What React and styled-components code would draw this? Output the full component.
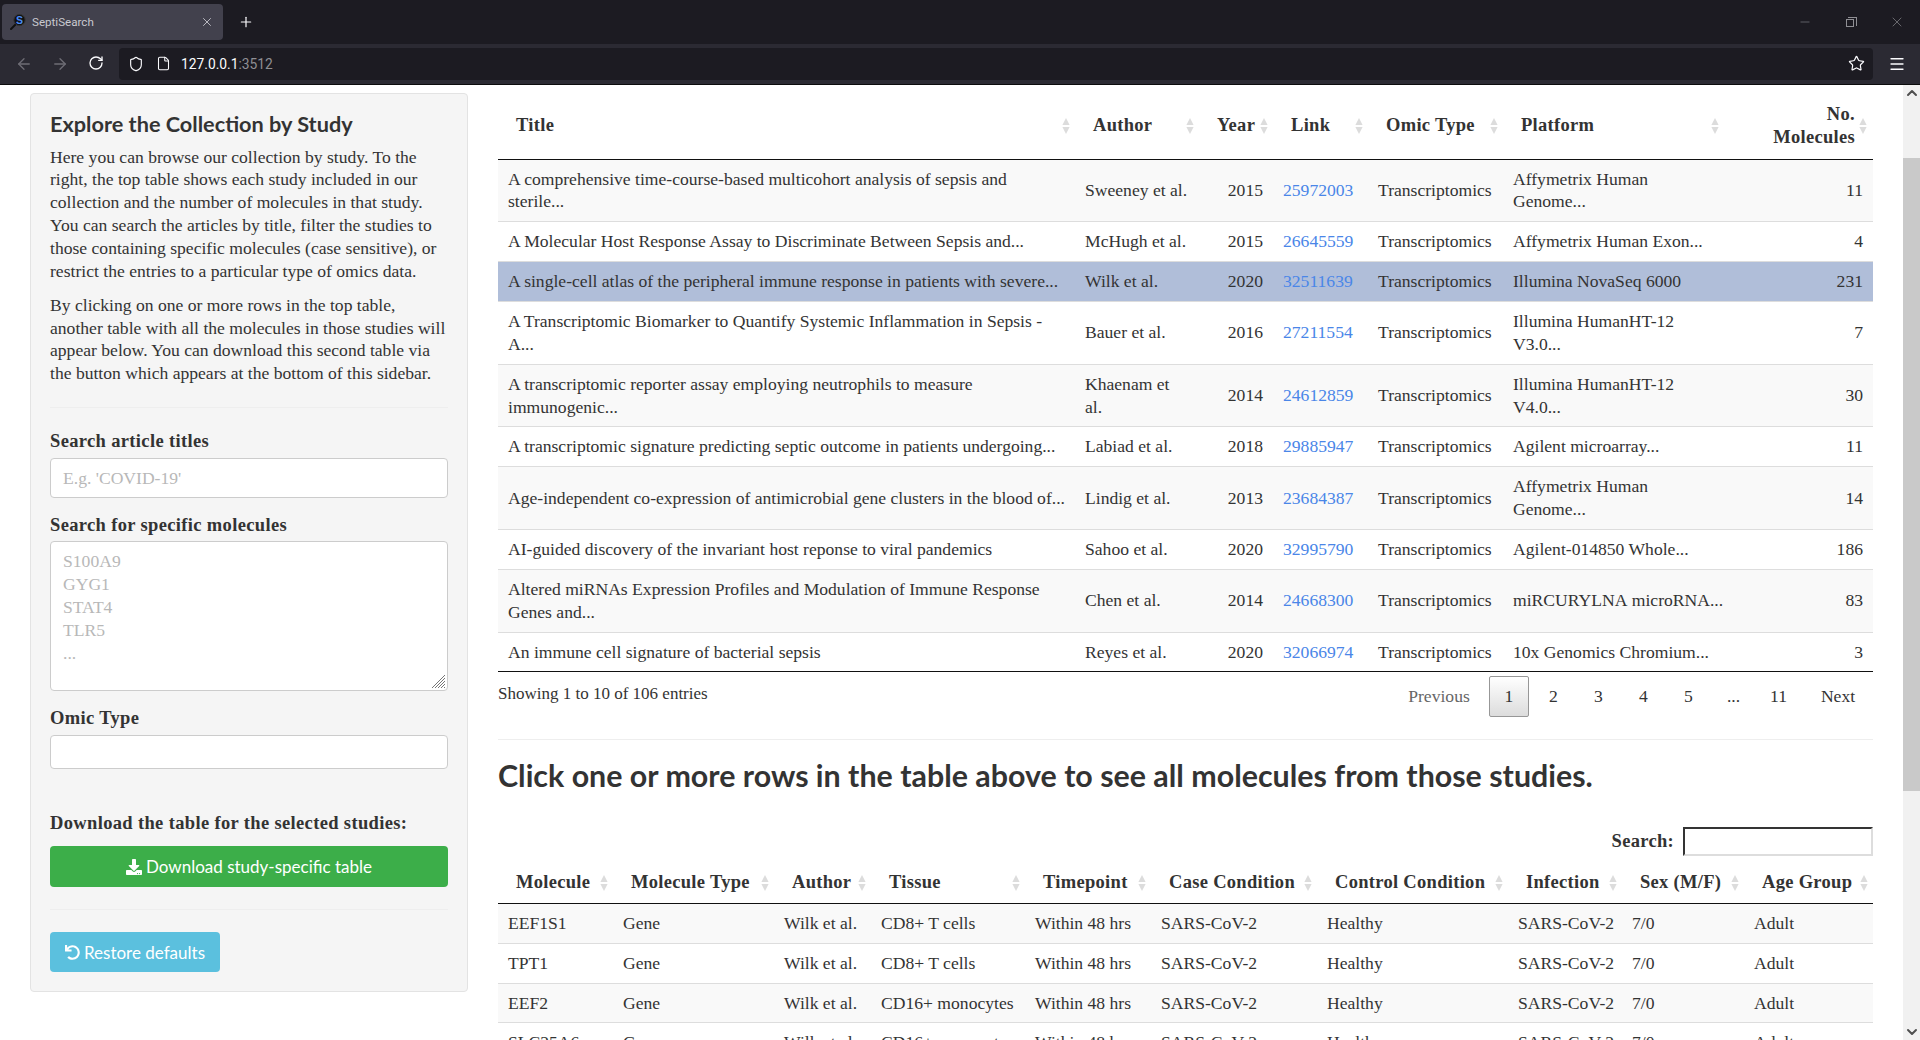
import React from 'react';
import styled, { createGlobalStyle } from 'styled-components';
import { ArrowLeft, ArrowRight, RotateCw, Shield, File, Star, Menu, Plus, X, Minus, ChevronUp, ChevronDown } from 'lucide-react';
import { FaDownload, FaUndo } from 'react-icons/fa';

const SERIF = '"Liberation Serif", "Times New Roman", serif';
const SANS = 'Lato, "Open Sans", sans-serif';

const studies = [
  { title: 'A comprehensive time-course-based multicohort analysis of sepsis and sterile...', author: 'Sweeney et al.', year: 2015, link: '25972003', platform: 'Affymetrix Human Genome...', n: 11 },
  { title: 'A Molecular Host Response Assay to Discriminate Between Sepsis and...', author: 'McHugh et al.', year: 2015, link: '26645559', platform: 'Affymetrix Human Exon...', n: 4 },
  { title: 'A single-cell atlas of the peripheral immune response in patients with severe...', author: 'Wilk et al.', year: 2020, link: '32511639', platform: 'Illumina NovaSeq 6000', n: 231, selected: true },
  { title: 'A Transcriptomic Biomarker to Quantify Systemic Inflammation in Sepsis - A...', author: 'Bauer et al.', year: 2016, link: '27211554', platform: 'Illumina HumanHT-12 V3.0...', n: 7 },
  { title: 'A transcriptomic reporter assay employing neutrophils to measure immunogenic...', author: 'Khaenam et al.', year: 2014, link: '24612859', platform: 'Illumina HumanHT-12 V4.0...', n: 30 },
  { title: 'A transcriptomic signature predicting septic outcome in patients undergoing...', author: 'Labiad et al.', year: 2018, link: '29885947', platform: 'Agilent microarray...', n: 11 },
  { title: 'Age-independent co-expression of antimicrobial gene clusters in the blood of...', author: 'Lindig et al.', year: 2013, link: '23684387', platform: 'Affymetrix Human Genome...', n: 14 },
  { title: 'AI-guided discovery of the invariant host reponse to viral pandemics', author: 'Sahoo et al.', year: 2020, link: '32995790', platform: 'Agilent-014850 Whole...', n: 186 },
  { title: 'Altered miRNAs Expression Profiles and Modulation of Immune Response Genes and...', author: 'Chen et al.', year: 2014, link: '24668300', platform: 'miRCURYLNA\u00a0microRNA...', n: 83 },
  { title: 'An immune cell signature of bacterial sepsis', author: 'Reyes et al.', year: 2020, link: '32066974', platform: '10x\u00a0Genomics\u00a0Chromium...', n: 3 },
];

const molecules = [
  ['EEF1S1', 'CD8+ T cells'],
  ['TPT1', 'CD8+ T cells'],
  ['EEF2', 'CD16+ monocytes'],
  ['SLC25A6', 'CD16+ monocytes'],
];

const studyCols = [577, 124, 74, 95, 135, 221, 149];
const studyHeads = ['Title', 'Author', 'Year', 'Link', 'Omic Type', 'Platform'];
const moleculeCols = [115, 161, 97, 154, 126, 166, 191, 114, 122, 129];
const moleculeHeads = ['Molecule', 'Molecule Type', 'Author', 'Tissue', 'Timepoint', 'Case Condition', 'Control Condition', 'Infection', 'Sex (M/F)', 'Age Group'];
const pages = ['2', '3', '4', '5', '...', '11'];

const GlobalStyle = createGlobalStyle`
  html, body {
    margin: 0;
    height: 100%;
    overflow: hidden;
    background: #fff;
  }
  * { box-sizing: border-box; }
`;

const Window = styled.div`
  height: 1040px;
  display: flex;
  flex-direction: column;
  color: #333;
  font: 17.6px/22.86px ${SERIF};
`;

const TabBar = styled.div`
  height: 44px;
  flex: none;
  display: flex;
  align-items: flex-start;
  padding-top: 4px;
  padding-left: 2px;
  background: #1c1b22;
  color: #fbfbfe;
`;

const Tab = styled.div`
  width: 221px;
  height: 36px;
  display: flex;
  align-items: center;
  padding: 0 9px 0 8px;
  background: #42414d;
  border-radius: 4px;
  font: 11.6px Roboto, sans-serif;
  color: #c9c9d0;
`;

const TabTitle = styled.span`
  flex: 1;
  margin-left: 6px;
`;

const NewTab = styled.div`
  width: 44px;
  height: 36px;
  display: flex;
  align-items: center;
  justify-content: center;
  margin-left: 1px;
`;

const WindowControls = styled.div`
  margin-left: auto;
  height: 36px;
  display: flex;
  color: #8f8f94;
`;

const ControlCell = styled.div`
  width: 46px;
  display: flex;
  align-items: center;
  justify-content: center;
`;

const RestoreIcon = styled.span`
  position: relative;
  display: block;
  width: 8px;
  height: 8px;
  margin: 2px 2px 0 0;
  border: 1px solid #8f8f94;

  &::before {
    content: '';
    position: absolute;
    left: 1px;
    top: -3px;
    width: 8px;
    height: 8px;
    border: 1px solid #8f8f94;
    border-left: 0;
    border-bottom: 0;
  }
`;

const Toolbar = styled.div`
  height: 41px;
  flex: none;
  display: flex;
  align-items: center;
  background: #2b2a33;
  border-bottom: 1px solid #0c0c0d;
  padding-bottom: 1px;
  color: #fbfbfe;
`;

const NavButton = styled.div`
  width: 36px;
  display: flex;
  justify-content: center;
  color: ${p => (p.$dim ? '#6f6e76' : '#fbfbfe')};
`;

const NavGroup = styled.div`
  width: 119px;
  flex: none;
  display: flex;
  padding-left: 6px;
`;

const UrlBar = styled.div`
  flex: 1;
  height: 32px;
  display: flex;
  align-items: center;
  background: #1c1b22;
  border-radius: 4px;
  padding: 0 8px 0 9px;
  font: 13.8px Roboto, sans-serif;
`;

const UrlIcon = styled.span`
  display: flex;
  margin-right: ${p => p.$gap}px;
`;

const Port = styled.span`
  color: #8f8f94;
`;

const UrlStar = styled.span`
  display: flex;
  margin-left: auto;
`;

const MenuButton = styled.div`
  width: 47px;
  flex: none;
  display: flex;
  justify-content: center;
`;

const Viewport = styled.div`
  flex: 1;
  min-height: 0;
  display: flex;
`;

const Page = styled.div`
  flex: 1;
  min-width: 0;
  overflow: hidden;
  display: flex;
  align-items: flex-start;
  gap: 30px;
  padding: 8px 30px 0;
`;

const Scrollbar = styled.div`
  width: 17px;
  flex: none;
  display: flex;
  flex-direction: column;
  align-items: center;
  background: #f1f1f1;
  color: #505050;
`;

const ScrollThumb = styled.div`
  width: 100%;
  height: 633px;
  margin-top: 57px;
  background: #c9c9c9;
`;

const ScrollEnd = styled.div`
  margin-top: auto;
  height: 16px;
  display: flex;
`;

const Sidebar = styled.aside`
  width: 438px;
  flex: none;
  padding: 19px;
  background: #f5f5f5;
  border: 1px solid #e3e3e3;
  border-radius: 4px;
`;

const SideTitle = styled.h4`
  margin: 0 0 10.6px;
  font: 700 21.7px/22px ${SANS};
  color: #333;
`;

const Intro = styled.p`
  margin: 0 0 11px;
`;

const Rule = styled.hr`
  border: 0;
  border-top: 1px solid #eee;
  margin: ${p => p.$my ?? 20}px 0;
`;

const Label = styled.label`
  display: block;
  font-size: 18.5px;
  font-weight: 700;
  letter-spacing: 0.35px;
  margin-bottom: 5px;
`;

const Field = styled.div`
  margin-bottom: 15.5px;
`;

const TextInput = styled.div`
  height: ${p => p.$h || 40}px;
  padding: 8px 12px;
  background: #fff;
  border: 1px solid #ccc;
  border-radius: 4px;
  color: #b8b8b8;
  position: relative;
`;

const Grip = styled.svg`
  position: absolute;
  right: 1px;
  bottom: 1px;
`;

const DownloadLabel = styled(Label)`
  margin-top: 43.5px;
  margin-bottom: 11px;
`;

const Button = styled.div`
  display: flex;
  align-items: center;
  justify-content: center;
  gap: 4px;
  height: ${p => p.$h}px;
  width: ${p => p.$w || '100%'};
  background: ${p => p.$bg};
  border-radius: 4px;
  color: #fff;
  font: 400 17px ${SANS};
`;

const Main = styled.main`
  flex: 1;
  min-width: 0;
`;

const Table = styled.table`
  width: 100%;
  table-layout: fixed;
  border-collapse: collapse;
  border-bottom: ${p => (p.$closed ? '1px solid #111' : '0')};
  white-space: ${p => (p.$nowrap ? 'nowrap' : 'normal')};
`;

const Th = styled.th`
  padding: 8px 0 8px 18px;
  border-bottom: 1px solid #111;
  text-align: left;
  height: ${p => p.$h}px;
  font-size: 18.5px;
  letter-spacing: 0.3px;
`;

const ThInner = styled.div`
  display: flex;
  align-items: center;
  justify-content: ${p => (p.$right ? 'flex-end' : 'space-between')};
  gap: ${p => (p.$right ? 1 : 0)}px;
  padding-right: ${p => (p.$right ? 6 : 5)}px;
  text-align: ${p => (p.$right ? 'right' : 'left')};
`;

const Row = styled.tr`
  background: ${p => (p.$selected ? '#b0bed9' : p.$odd ? '#f9f9f9' : '#fff')};
`;

const Td = styled.td`
  padding: 8px 10px;
  border-top: 1px solid #ddd;
  text-align: ${p => (p.$right ? 'right' : 'left')};

  tr:first-child > & {
    border-top: 0;
  }
`;

const CellLink = styled.a`
  color: #4a86e8;
  text-decoration: none;
`;

const TableFooter = styled.div`
  display: flex;
  justify-content: space-between;
  align-items: flex-start;
  height: 67px;
  padding-top: 4px;
`;

const Info = styled.div`
  padding-top: 7px;
  font-size: 17px;
`;

const Pager = styled.div`
  display: flex;
  align-items: center;
`;

const PageLink = styled.div`
  width: ${p => p.$w || 45}px;
  height: 41px;
  margin-right: ${p => (p.$current ? 2 : 0)}px;
  padding-left: ${p => (p.$next ? 2 : 0)}px;
  display: flex;
  align-items: center;
  justify-content: center;
  color: ${p => (p.$muted ? '#666' : '#333')};
  border: 1px solid ${p => (p.$current ? '#979797' : 'transparent')};
  border-radius: 2px;
  background: ${p => (p.$current ? 'linear-gradient(to bottom, #fff 0%, #dcdcdc 100%)' : 'transparent')};
`;

const SubHeading = styled.h3`
  margin: 19px 0 0;
  font: 700 30.4px/32px ${SANS};
  color: #333;
`;

const SearchRow = styled.div`
  display: flex;
  justify-content: flex-end;
  align-items: center;
  gap: 9px;
  margin: 36px 0 6px;
  font-size: 18.5px;
  font-weight: 700;
  letter-spacing: 0.3px;
`;

const SearchBox = styled.div`
  width: 190px;
  height: 29px;
  border: 2px inset #ddd;
  border-top-color: #888;
  border-left-color: #888;
  background: #fff;
`;

const Arrows = styled.svg`
  flex: none;
  margin-left: 3px;
`;

function SortArrows() {
  return (
    <Arrows width="8" height="16" viewBox="0 0 8 16">
      <path d="M4 0L7.6 7H0.4z" fill="#dcdcdc" />
      <path d="M4 16L0.4 9H7.6z" fill="#dcdcdc" />
    </Arrows>
  );
}

function Favicon() {
  return (
    <svg width="16" height="16" viewBox="0 0 16 16">
      <path d="M1 15L6 10" stroke="#111" strokeWidth="2" strokeLinecap="round" />
      <circle cx="9.5" cy="6" r="5.6" fill="#111" stroke="#333" />
      <text x="9.5" y="9.6" textAnchor="middle" fontSize="10.5" fontWeight="700" fontFamily="Liberation Sans" fill="#4b8cf5">S</text>
    </svg>
  );
}

function Browser() {
  return (
    <>
      <TabBar>
        <Tab>
          <Favicon />
          <TabTitle>SeptiSearch</TabTitle>
          <X size={14} strokeWidth={1.5} />
        </Tab>
        <NewTab><Plus size={16} strokeWidth={1.8} /></NewTab>
        <WindowControls>
          <ControlCell><Minus size={14} strokeWidth={1} /></ControlCell>
          <ControlCell><RestoreIcon /></ControlCell>
          <ControlCell><X size={16} strokeWidth={1} /></ControlCell>
        </WindowControls>
      </TabBar>
      <Toolbar>
        <NavGroup>
          <NavButton $dim><ArrowLeft size={18} strokeWidth={1.7} /></NavButton>
          <NavButton $dim><ArrowRight size={18} strokeWidth={1.7} /></NavButton>
          <NavButton><RotateCw size={16} strokeWidth={2} /></NavButton>
        </NavGroup>
        <UrlBar>
          <UrlIcon $gap={12}><Shield size={16} strokeWidth={1.7} /></UrlIcon>
          <UrlIcon $gap={10}><File size={15} strokeWidth={1.7} /></UrlIcon>
          <span>127.0.0.1<Port>:3512</Port></span>
          <UrlStar><Star size={17} strokeWidth={1.7} /></UrlStar>
        </UrlBar>
        <MenuButton><Menu size={18} strokeWidth={1.7} /></MenuButton>
      </Toolbar>
    </>
  );
}

function Side() {
  return (
    <Sidebar>
      <SideTitle>Explore the Collection by Study</SideTitle>
      <Intro>Here you can browse our collection by study. To the right, the top table shows each study included in our collection and the number of molecules in that study. You can search the articles by title, filter the studies to those containing specific molecules (case sensitive), or restrict the entries to a particular type of omics data.</Intro>
      <Intro>By clicking on one or more rows in the top table, another table with all the molecules in those studies will appear below. You can download this second table via the button which appears at the bottom of this sidebar.</Intro>
      <Rule $my={22} />
      <Field>
        <Label>Search article titles</Label>
        <TextInput>E.g. 'COVID-19'</TextInput>
      </Field>
      <Field>
        <Label>Search for specific molecules</Label>
        <TextInput $h={150}>
          S100A9<br />GYG1<br />STAT4<br />TLR5<br />...
          <Grip width="15" height="15" viewBox="0 0 15 15">
            <path d="M14 1L1 14M14 4L4 14M14 7L7 14M14 10L10 14M14 13L13 14" stroke="#777" />
          </Grip>
        </TextInput>
      </Field>
      <Field>
        <Label>Omic Type</Label>
        <TextInput $h={34} />
      </Field>
      <DownloadLabel>Download the table for the selected studies:</DownloadLabel>
      <Button $h={41} $bg="#3cae49"><FaDownload size={16} />Download study-specific table</Button>
      <Rule $my={22} />
      <Button $h={40} $w="170px" $bg="#5bc0de"><FaUndo size={15} />Restore defaults</Button>
    </Sidebar>
  );
}

function StudyTable() {
  return (
    <Table $closed>
      <colgroup>{studyCols.map((w, i) => <col key={i} width={w} />)}</colgroup>
      <thead>
        <tr>
          {studyHeads.map(h => (
            <Th key={h} $h={66}><ThInner>{h}<SortArrows /></ThInner></Th>
          ))}
          <Th $h={66}><ThInner $right><span>No.<br />Molecules</span><SortArrows /></ThInner></Th>
        </tr>
      </thead>
      <tbody>
        {studies.map((s, i) => (
          <Row key={s.link} $odd={i % 2 === 0} $selected={s.selected}>
            <Td>{s.title}</Td>
            <Td>{s.author}</Td>
            <Td $right>{s.year}</Td>
            <Td><CellLink href="#">{s.link}</CellLink></Td>
            <Td>Transcriptomics</Td>
            <Td>{s.platform}</Td>
            <Td $right>{s.n}</Td>
          </Row>
        ))}
      </tbody>
    </Table>
  );
}

function MoleculeTable() {
  return (
    <Table $nowrap>
      <colgroup>{moleculeCols.map((w, i) => <col key={i} width={w} />)}</colgroup>
      <thead>
        <tr>
          {moleculeHeads.map(h => (
            <Th key={h} $h={41}><ThInner>{h}<SortArrows /></ThInner></Th>
          ))}
        </tr>
      </thead>
      <tbody>
        {molecules.map(([name, tissue], i) => (
          <Row key={name} $odd={i % 2 === 0}>
            <Td>{name}</Td>
            <Td>Gene</Td>
            <Td>Wilk et al.</Td>
            <Td>{tissue}</Td>
            <Td>Within 48 hrs</Td>
            <Td>SARS-CoV-2</Td>
            <Td>Healthy</Td>
            <Td>SARS-CoV-2</Td>
            <Td>7/0</Td>
            <Td>Adult</Td>
          </Row>
        ))}
      </tbody>
    </Table>
  );
}

export default function App() {
  return (
    <Window>
      <GlobalStyle />
      <Browser />
      <Viewport>
        <Page>
          <Side />
          <Main>
            <StudyTable />
            <TableFooter>
              <Info>Showing 1 to 10 of 106 entries</Info>
              <Pager>
                <PageLink $w={100} $muted>Previous</PageLink>
                <PageLink $w={40} $current>1</PageLink>
                {pages.map(p => <PageLink key={p}>{p}</PageLink>)}
                <PageLink $w={72} $next>Next</PageLink>
              </Pager>
            </TableFooter>
            <Rule $my={0} />
            <SubHeading>Click one or more rows in the table above to see all molecules from those studies.</SubHeading>
            <SearchRow>Search:<SearchBox /></SearchRow>
            <MoleculeTable />
          </Main>
        </Page>
        <Scrollbar>
          <ChevronUp size={16} strokeWidth={3} />
          <ScrollThumb />
          <ScrollEnd><ChevronDown size={16} strokeWidth={3} /></ScrollEnd>
        </Scrollbar>
      </Viewport>
    </Window>
  );
}
